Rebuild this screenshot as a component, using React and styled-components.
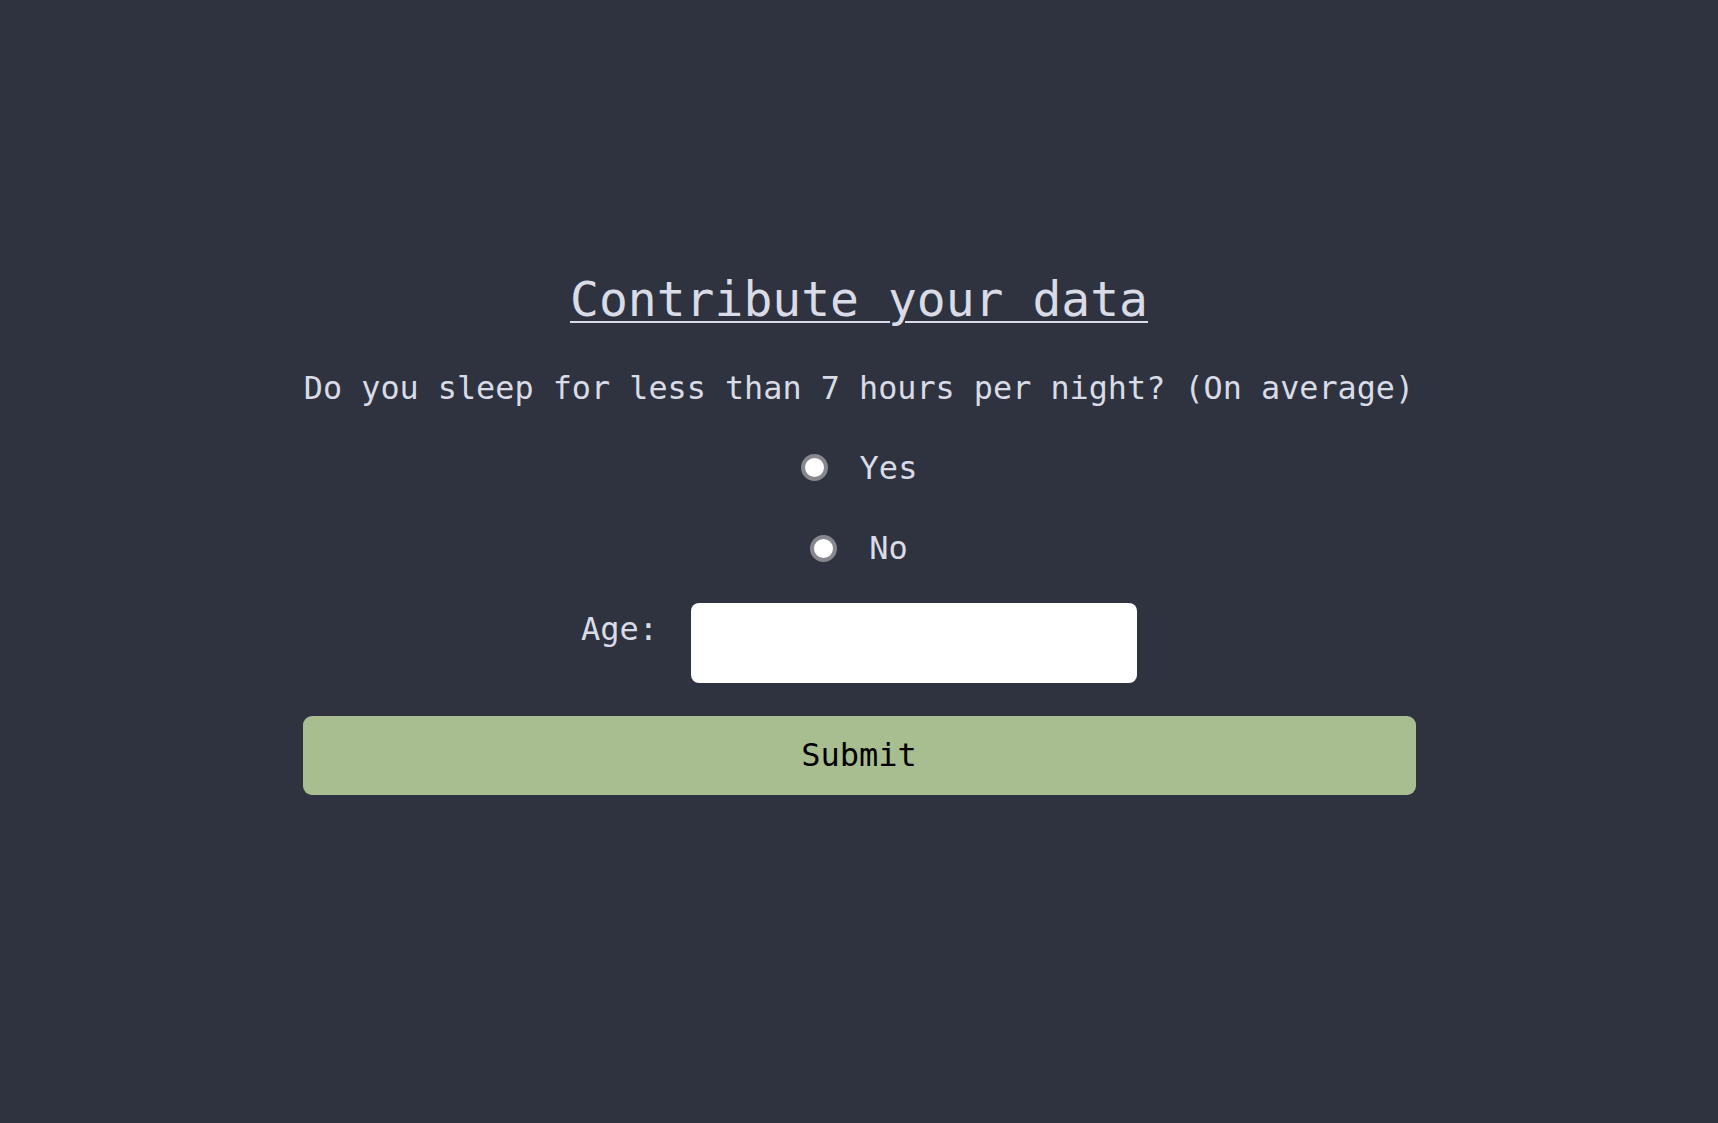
import React from "react";
import styled, { createGlobalStyle } from "styled-components";

const Global = createGlobalStyle`
  html, body {
    margin: 0;
    padding: 0;
    background: #2f333f;
  }
  body {
    font-family: "DejaVu Sans Mono", "Liberation Mono", monospace;
    color: #d9dce6;
  }
`;

const Page = styled.main`
  min-height: 100vh;
  box-sizing: border-box;
  padding-top: 271px;
  display: flex;
  justify-content: center;
`;

const Form = styled.form`
  width: 1113px;
  display: flex;
  flex-direction: column;
  align-items: center;
`;

const Title = styled.h1`
  margin: 0 0 40px;
  font-size: 48px;
  font-weight: 400;
  line-height: 1.2;
  text-decoration: underline;
  text-decoration-thickness: 2px;
  text-underline-offset: 5px;
  color: #d9dce6;
`;

const Question = styled.p`
  margin: 0 0 42px;
  font-size: 31.8px;
  line-height: 1.2;
  white-space: nowrap;
`;

const OptionRow = styled.label`
  display: flex;
  align-items: center;
  gap: 32px;
  font-size: 32px;
  line-height: 1.2;
  margin-bottom: ${(p) => p.$after}px;
  cursor: pointer;
`;

const Radio = styled.input.attrs({ type: "radio" })`
  appearance: none;
  -webkit-appearance: none;
  margin: 0;
  width: 27px;
  height: 27px;
  border-radius: 50%;
  box-sizing: border-box;
  border: 4px solid #87878f;
  background: #ffffff;
  flex: none;
  &:checked {
    background: radial-gradient(circle, #2f333f 0 45%, #ffffff 50%);
  }
`;

const FieldRow = styled.div`
  display: flex;
  align-items: flex-start;
  gap: 33px;
  margin-bottom: 33px;
`;

const FieldLabel = styled.label`
  font-size: 32px;
  line-height: 1.2;
  padding-top: 7px;
`;

const TextInput = styled.input`
  width: 446px;
  height: 80px;
  box-sizing: border-box;
  border: none;
  border-radius: 8px;
  background: #ffffff;
  font-family: inherit;
  font-size: 28px;
  padding: 0 16px;
  outline: none;
`;

const SubmitButton = styled.button`
  width: 100%;
  height: 79px;
  border: none;
  border-radius: 9px;
  background: #a8be90;
  color: #000000;
  font-family: inherit;
  font-size: 32px;
  cursor: pointer;
`;

export default function App() {
  return (
    <>
      <Global />
      <Page>
        <Form onSubmit={(e) => e.preventDefault()}>
          <Title>Contribute your data</Title>
          <Question>Do you sleep for less than 7 hours per night? (On average)</Question>
          <OptionRow $after={42}>
            <Radio name="sleep" value="yes" />
            <span>Yes</span>
          </OptionRow>
          <OptionRow $after={35}>
            <Radio name="sleep" value="no" />
            <span>No</span>
          </OptionRow>
          <FieldRow>
            <FieldLabel htmlFor="age">Age:</FieldLabel>
            <TextInput id="age" type="text" />
          </FieldRow>
          <SubmitButton type="submit">Submit</SubmitButton>
        </Form>
      </Page>
    </>
  );
}
